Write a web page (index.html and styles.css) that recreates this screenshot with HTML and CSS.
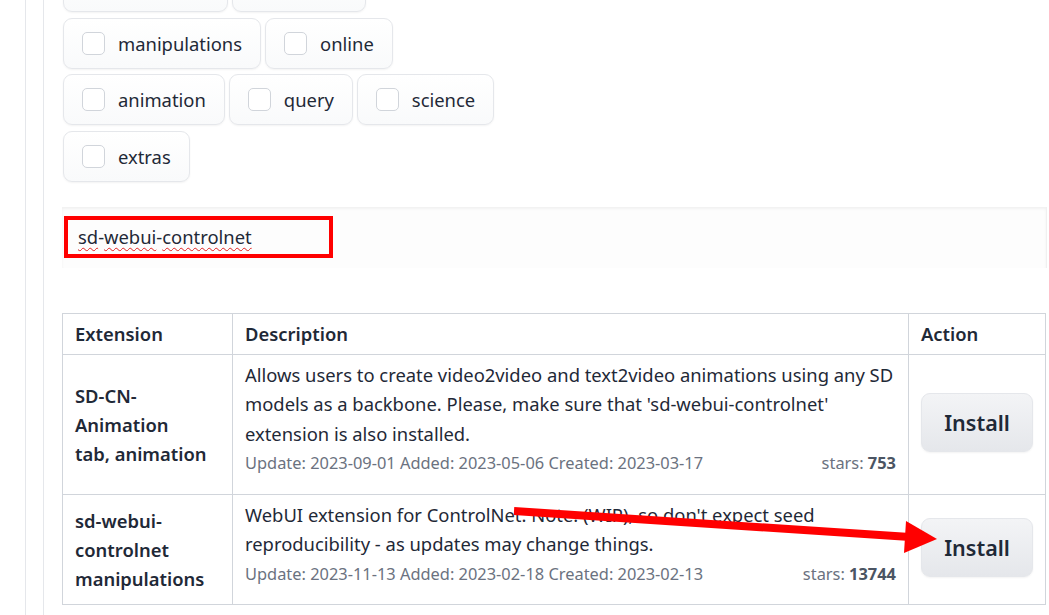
FILE: index.html
```html
<!DOCTYPE html>
<html lang="en">
<head>
    <meta charset="UTF-8">
    <title>Extensions</title>
    <link rel="stylesheet" href="styles.css">
</head>
<body>
    <div class="page">
        <div class="outer">
            <div class="inner">
                <div class="tags">
                    <div class="tag-row">
                        <div class="chip stub" style="width: 165px"></div>
                        <div class="chip stub" style="width: 134px"></div>
                    </div>
                    <div class="tag-row">
                        <label class="chip"><span class="box"></span>manipulations</label>
                        <label class="chip"><span class="box"></span>online</label>
                    </div>
                    <div class="tag-row">
                        <label class="chip"><span class="box"></span>animation</label>
                        <label class="chip"><span class="box"></span>query</label>
                        <label class="chip"><span class="box"></span>science</label>
                    </div>
                    <div class="tag-row">
                        <label class="chip"><span class="box"></span>extras</label>
                    </div>
                </div>

                <div class="search">
                    <div class="search-text"><span class="typo">sd</span>-<span class="typo">webui</span>-<span class="typo">controlnet</span></div>
                    <div class="mark"></div>
                </div>

                <table class="ext-table">
                    <colgroup>
                        <col class="col-name">
                        <col class="col-desc">
                        <col class="col-action">
                    </colgroup>
                    <thead>
                        <tr>
                            <th>Extension</th>
                            <th>Description</th>
                            <th>Action</th>
                        </tr>
                    </thead>
                    <tbody>
                        <tr>
                            <td class="name">SD-CN-<br>Animation<br>tab, animation</td>
                            <td class="desc">
                                Allows users to create video2video and text2video animations using any SD<br>
                                models as a backbone. Please, make sure that 'sd-webui-controlnet'<br>
                                extension is also installed.
                                <div class="meta">
                                    <span>Update: 2023-09-01 Added: 2023-05-06 Created: 2023-03-17</span>
                                    <span>stars: <b>753</b></span>
                                </div>
                            </td>
                            <td class="action"><button class="install">Install</button></td>
                        </tr>
                        <tr>
                            <td class="name">sd-webui-<br>controlnet<br>manipulations</td>
                            <td class="desc">
                                WebUI extension for ControlNet. Note: (WIP), so don't expect seed<br>
                                reproducibility - as updates may change things.
                                <div class="meta">
                                    <span>Update: 2023-11-13 Added: 2023-02-18 Created: 2023-02-13</span>
                                    <span>stars: <b>13744</b></span>
                                </div>
                            </td>
                            <td class="action"><button class="install">Install</button></td>
                        </tr>
                    </tbody>
                </table>
            </div>
        </div>

        <!-- annotation arrow -->
        <svg class="arrow" width="1049" height="615" viewBox="0 0 1049 615">
            <line x1="514" y1="511" x2="910" y2="537" stroke="#ff0000" stroke-width="8"/>
            <polygon points="906,521 937,539 904,553" fill="#ff0000"/>
        </svg>
    </div>
</body>
</html>
```

FILE: styles.css
```css
* {
    margin: 0;
    padding: 0;
    box-sizing: border-box;
}

body {
    font-family: 'Noto Sans', 'Open Sans', sans-serif;
    background-color: #fff;
    color: #1f2937;
    overflow: hidden;
}

.page {
    position: relative;
    width: 1049px;
    height: 615px;
    overflow: hidden;
}

.outer {
    display: flow-root;
    margin-left: 25px;
    border-left: 1px solid #e5e7eb;
    padding-left: 17px;
    height: 100%;
}

.inner {
    display: flow-root;
    border-left: 1px solid #e5e7eb;
    padding-left: 18px;
    width: 1004px;
    height: 100%;
}

/* tag checkboxes */
.tags {
    display: flex;
    flex-direction: column;
    gap: 5.5px;
    margin-top: -39px;
    padding-left: 1px;
}

.tag-row {
    display: flex;
    gap: 4px;
}

.chip {
    display: flex;
    align-items: center;
    height: 51px;
    padding: 0 18px;
    border: 1px solid #e5e7eb;
    border-radius: 9px;
    background: linear-gradient(180deg, #fff, #f9fafb);
    box-shadow: 0 1px 2px rgba(0, 0, 0, 0.05);
    font-size: 18.4px;
}

.box {
    width: 23px;
    height: 23px;
    margin-right: 13px;
    border: 1px solid #d1d5db;
    border-radius: 5px;
    background: #fff;
}

/* search box */
.search {
    position: relative;
    margin-top: 25px;
    height: 61px;
    background: #fdfdfd;
    box-shadow: inset 0 2px 3px rgba(0, 0, 0, 0.05);
    border-right: 1px solid #f0f0f0;
}

.search-text {
    padding: 17px 0 0 16px;
    font-size: 18.4px;
    line-height: 26px;
}

.typo {
    text-decoration: underline wavy #e02020;
    text-decoration-thickness: 1px;
    text-underline-offset: 3px;
}

.mark {
    position: absolute;
    left: 2px;
    top: 9px;
    width: 269px;
    height: 42px;
    border: 4px solid #ff0000;
}

/* extension table */
.ext-table {
    margin-top: 45px;
    width: 984px;
    border-collapse: collapse;
    table-layout: fixed;
    font-size: 18.4px;
}

.col-name {
    width: 170px;
}

.col-action {
    width: 137px;
}

.ext-table th,
.ext-table td {
    border: 1px solid #d1d5db;
    text-align: left;
}

.ext-table th {
    padding: 6px 12px;
    line-height: 28px;
    font-weight: 600;
}

.name {
    padding: 11px 12px;
    line-height: 29px;
    font-weight: 600;
    vertical-align: middle;
    white-space: nowrap;
}

.desc {
    padding: 5px 12px 16px;
    line-height: 29.5px;
    vertical-align: top;
    white-space: nowrap;
}

.meta {
    display: flex;
    justify-content: space-between;
    font-size: 16.4px;
    color: #6b7280;
}

.meta b {
    color: #4b5563;
}

.action {
    padding: 0 12px;
    vertical-align: middle;
}

.install {
    display: block;
    width: 112px;
    height: 59px;
    margin-top: -4px;
    border: 1px solid #e5e7eb;
    border-radius: 9px;
    background: linear-gradient(180deg, #f3f4f6, #e5e7eb);
    box-shadow: 0 1px 2px rgba(0, 0, 0, 0.05);
    font-family: inherit;
    font-size: 21.5px;
    font-weight: 600;
    color: #1f2937;
}

.arrow {
    position: absolute;
    left: 0;
    top: 0;
    pointer-events: none;
}
```
